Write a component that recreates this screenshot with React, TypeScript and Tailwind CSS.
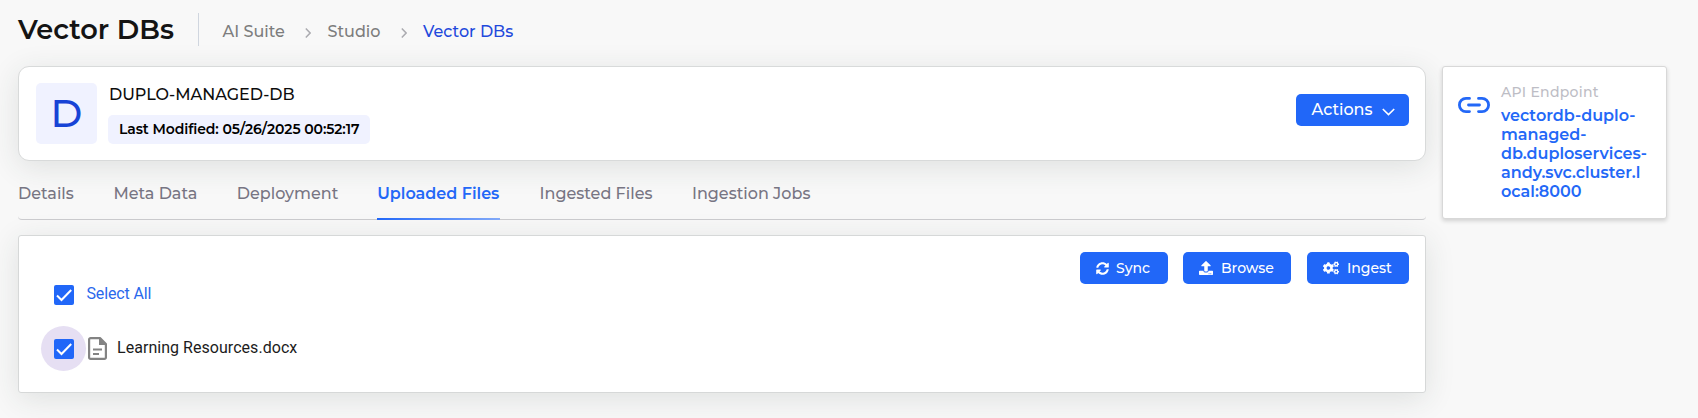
import type { ReactNode } from "react";
import { FaCogs, FaSyncAlt, FaUpload } from "react-icons/fa";

const tabs = [
  { label: "Details", style: "w-[56px]" },
  { label: "Meta Data", style: "w-[84px]" },
  { label: "Deployment", style: "w-[101px]" },
  { label: "Uploaded Files", style: "w-[123px]", active: true },
  { label: "Ingested Files", style: "w-[113px]" },
  { label: "Ingestion Jobs", style: "w-[119px]" },
];

function CrumbArrow({ className }: { className: string }) {
  return (
    <svg className={className} width="6" height="10" viewBox="0 0 6 10" fill="none" stroke="#ababb0" strokeWidth="1.5">
      <path d="M0.8 0.6 5.1 5 0.8 9.4" />
    </svg>
  );
}

function LinkIcon() {
  return (
    <svg className="mt-[30px] ml-[15px] shrink-0" width="32" height="16" viewBox="0 0 32 16" fill="none" stroke="#2368f7" strokeWidth="2.8" strokeLinecap="round">
      <path d="M11.5 1.4H8a6.6 6.6 0 0 0 0 13.2h3.5M20.5 1.4H24a6.6 6.6 0 0 1 0 13.2h-3.5M10.5 8h11" />
    </svg>
  );
}

function FileIcon() {
  return (
    <svg className="-mt-px ml-[14px] shrink-0" width="19" height="23" viewBox="0 0 19 23" fill="none" stroke="#838383" strokeWidth="2.2">
      <path d="M12 1.1H2.6A1.5 1.5 0 0 0 1.1 2.6v17.8a1.5 1.5 0 0 0 1.5 1.5h13.8a1.5 1.5 0 0 0 1.5-1.5V7z" strokeLinejoin="round" />
      <path d="M11 1v7h7z" fill="#838383" stroke="none" />
      <path d="M5 12.5h9M5 17h6" />
    </svg>
  );
}

function Checkbox() {
  return (
    <span className="relative flex size-5 shrink-0 items-center justify-center rounded-[2px] bg-[#2167f8]">
      <svg width="20" height="20" viewBox="0 0 20 20" fill="none" stroke="#fff" strokeWidth="2">
        <path d="M3 10.5 7.5 15 17.2 5" />
      </svg>
    </span>
  );
}

function ActionButton({ icon, label, className }: { icon: ReactNode; label: string; className: string }) {
  return (
    <button className={`flex h-8 items-center rounded-[5px] bg-[#2167f8] text-[14px] leading-[33px] font-medium text-white ${className}`}>
      {icon}
      <span className="pt-px">{label}</span>
    </button>
  );
}

export default function App() {
  return (
    <div className="h-[418px] overflow-hidden bg-[#f8f8f8] pl-[18px] font-['Montserrat','Inter',sans-serif] whitespace-nowrap">
      <header className="flex h-[66px] items-start">
        <h1 className="w-[180px] text-[27.2px] leading-[60px] font-semibold text-[#141414]">Vector DBs</h1>
        <div className="mt-[13px] h-[33px] w-px bg-[#d0d6df]" />
        <nav className="ml-[23.5px] flex items-center text-[16px] leading-[64px] font-medium text-[#7d7d7d]">
          <span className="w-[82.5px]">AI Suite</span>
          <CrumbArrow className="mt-px" />
          <span className="ml-[16.5px] w-[73px]">Studio</span>
          <CrumbArrow className="mt-px" />
          <span className="ml-[16.5px] text-[#1f49dc]">Vector DBs</span>
        </nav>
      </header>

      <div className="flex items-start">
        <main className="w-[1408px]">
          <section className="flex h-[95px] items-start rounded-[11px] border border-[#d8dada] bg-white pt-4 pr-4 pl-[17px] shadow-[0_6px_30px_rgba(40,60,50,0.12)]">
            <div className="flex size-[61px] items-center justify-center rounded-[5px] bg-[#f0f2ff] text-[38.5px] font-medium text-[#1743d6]">D</div>
            <div className="ml-[11px]">
              <div className="pl-px text-[16px] leading-[23px] font-medium text-[#0c0c0c]">DUPLO-MANAGED-DB</div>
              <div className="mt-[9px] h-[29px] w-[262px] rounded-[5px] bg-[#f0f2ff] pl-[11px] text-[14px] leading-[29px] font-semibold tracking-[-0.09px] text-black">
                Last Modified: 05/26/2025 00:52:17
              </div>
            </div>
            <button className="mt-[11px] ml-auto flex h-8 w-[113px] items-center rounded-[5px] bg-[#2167f8] pl-[15.5px] text-[16px] font-medium text-white">
              <span className="w-[70px] text-left">Actions</span>
              <svg className="mt-[3px]" width="13" height="8" viewBox="0 0 13 8" fill="none" stroke="#fff" strokeWidth="1.6">
                <path d="M0.8 1 6.5 6.6 12.2 1" />
              </svg>
            </button>
          </section>

          <div className="flex h-[59px] gap-[39.4px] rounded-[4px] border-b border-[#cccccf] text-[16px] font-medium text-[#777583]">
            {tabs.map((t) => (
              <div
                key={t.label}
                className={`relative pt-[21px] leading-6 ${t.style} ${t.active ? "font-semibold text-[#2368f7]" : ""}`}
              >
                {t.label}
                {t.active && <span className="absolute inset-x-0 -bottom-px h-[2px] bg-linear-to-r from-[#2167f8] to-[#82a9f8]" />}
              </div>
            ))}
          </div>

          <section className="mt-[15px] h-[158px] rounded-[3px] border border-[#d6d8d8] bg-white pt-4 pr-4 shadow-[0_6px_30px_rgba(40,60,50,0.12)]">
            <div className="flex justify-end">
              <ActionButton label="Sync" className="w-[88px] pl-4" icon={<FaSyncAlt className="mr-[7px] size-[13px]" />} />
              <ActionButton label="Browse" className="ml-[15px] w-[108px] pl-4" icon={<FaUpload className="mr-2 size-[14px]" />} />
              <ActionButton label="Ingest" className="ml-4 w-[102px] pl-4" icon={<FaCogs className="mr-2 size-4" />} />
            </div>
            <div className="mt-px flex h-5 items-center pl-[35px] font-['Roboto',sans-serif] text-[16px] leading-5 text-[#2a68ec]">
              <Checkbox />
              <span className="-mt-[2px] ml-[12.5px] tracking-[-0.15px]">Select All</span>
            </div>
            <div className="mt-[34px] flex h-5 items-center pl-[35px] font-['Roboto',sans-serif] text-[16px] leading-5 text-[#1c1c1c]">
              <span className="relative">
                <span className="absolute -top-[13px] -left-[13px] size-[45px] rounded-full bg-[#e6dff3]" />
                <Checkbox />
              </span>
              <FileIcon />
              <span className="-mt-[2px] ml-[10px] tracking-[0.04px]">Learning Resources.docx</span>
            </div>
          </section>
        </main>

        <aside className="ml-4 flex h-[153px] w-[225px] items-start rounded-[3px] border border-[#d8d8d8] bg-white shadow-[0_2px_4px_rgba(0,0,0,0.16)]">
          <LinkIcon />
          <div className="ml-[11px] pt-[15px]">
            <div className="text-[14px] leading-5 font-medium tracking-[0.28px] text-[#bdbdc5]">API Endpoint</div>
            <div className="mt-[4px] text-[16px] leading-[19px] font-semibold text-[#2368f7]">
              <div>vectordb-duplo-</div>
              <div>managed-</div>
              <div>db.duploservices-</div>
              <div>andy.svc.cluster.l</div>
              <div>ocal:8000</div>
            </div>
          </div>
        </aside>
      </div>
    </div>
  );
}
